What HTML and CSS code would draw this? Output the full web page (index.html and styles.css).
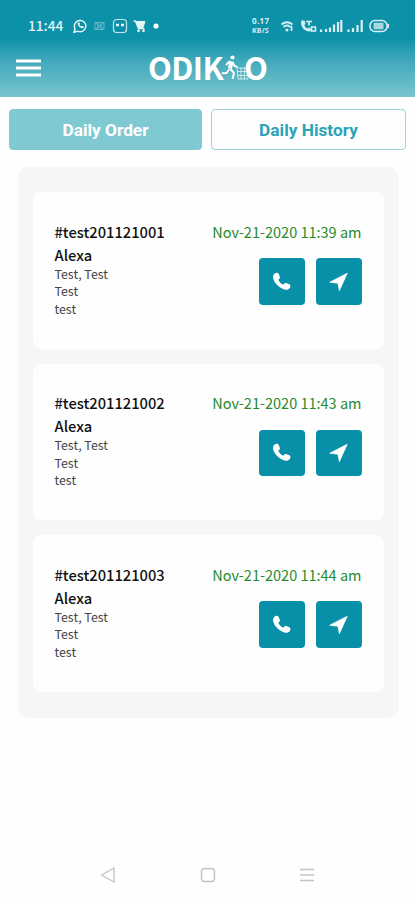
FILE: index.html
```html
<!DOCTYPE html>
<html lang="en">
<head>
<meta charset="utf-8">
<title>Odikko – Daily Order</title>
<link rel="stylesheet" href="styles.css">
</head>
<body>
<svg width="0" height="0" class="defs">
  <symbol id="phone" viewBox="0 0 24 24"><path d="M4.600 2.600c1.500-1 3.500-.7 4.200.8l1.300 3.300c.3 1.100 0 1.900-.8 2.500l-1 .9c1.200 2.600 3 4.400 5.600 5.600l1.100-1.200c.7-.8 1.500-1 2.500-.7l3.500 1.300c1.400.7 1.600 2.700.5 4.200-1.600 2.300-4.700 2.600-7.800 1.300C8.600 18.400 4.600 14.400 2.800 9.700 1.700 6.700 2.500 4 4.600 2.600z" fill="#fff"/></symbol>
  <symbol id="nav" viewBox="0 0 24 24"><path d="M22 2.500 13 22.500 11.300 14 2 12.800z" fill="#fff" stroke="#fff" stroke-width=".8" stroke-linejoin="round"/></symbol>
</svg>
<header class="header">
  <div class="status">
    <span class="clock">11:44</span>
    <svg class="status-left" width="90" height="18" viewBox="0 0 90 18" fill="none" stroke="#e3f4f6">
      <path d="M1 15.200l1-3.500A5.700 5.700 0 1 1 4.500 14.200z" stroke-width="1.500"/>
      <path d="M4.600 5.800c-.5 2.900 3 6.100 5.900 5.300l.2-1.500-1.700-.8-.9.800-1.800-1.900.8-.8-.7-1.500z" fill="#e3f4f6" stroke="none"/>
      <g opacity=".4"><rect x="22" y="5.500" width="9" height="7"/><path d="M22 5.500l9 7M31 5.500l-9 7M25 6v6M28 6v6"/></g>
      <rect x="40.500" y="2.500" width="13" height="13" rx="3" stroke-width="1.200" opacity=".85"/>
      <path d="M43 8h3M48 8h3" stroke-width="2.600"/>
      <path d="M60.500 4h2l3 7.500h6" stroke-width="1.400"/><path d="M63 4.500h9l-2 6h-5z" fill="#e3f4f6"/><circle cx="65.500" cy="13.700" r="1" fill="#e3f4f6"/><circle cx="70.500" cy="13.700" r="1" fill="#e3f4f6"/>
      <circle cx="83" cy="9" r="2.600" fill="#fff" stroke="none"/>
    </svg>
    <div class="speed"><div>0.17</div><div class="unit">KB/S</div></div>
    <svg class="status-right" width="112" height="18" viewBox="0 0 112 18" fill="none" stroke="#d9f0f3">
      <path d="M1.500 7.500q5.500-4.500 11 0M3.500 10q3.500-3 7 0" stroke-width="1.700"/><circle cx="7" cy="13" r="1.500" fill="#d9f0f3" stroke="none"/><path d="M11.500 9v5" stroke-width="1.700"/>
      <path d="M21.500 3.500c-2 5.500 3 11.500 9 11l.5-2.500-2.500-1.500-1.400 1c-1.500-.8-2.300-2-2.800-3.400l1.200-1.100-1-3.500z" fill="#d9f0f3" stroke="none"/>
      <path d="M26 4.500h6M29 4.500v4M31.500 10h4v4h-4z" stroke-width="1.600"/>
      <path d="M41 15v-2.500M46 15v-3M50 15v-4.500M54 15V7.500M58 15V5M61.300 15V3M68.500 15v-2.500M73 15v-4M77.500 15V8M81.700 15V3" stroke-width="2.200"/>
      <rect x="90" y="3.500" width="17" height="11" rx="5" stroke-width="1.500"/><rect x="93.500" y="5.700" width="10" height="6.600" rx="1" fill="#d9f0f3" stroke="none" opacity=".75"/><path d="M108.200 7v4" stroke-width="1.600"/>
    </svg>
  </div>
  <div class="bar">
    <svg class="menu" width="25" height="18" viewBox="0 0 25 18"><path d="M0 2h25M0 9h25M0 16h25" stroke="#fff" stroke-width="2.800"/></svg>
    <div class="logo"><span class="word">ODIK</span>
      <svg class="runner" width="28" height="28" viewBox="0 0 28 28" fill="none" stroke="#fff">
        <circle cx="10.500" cy="3.500" r="2.100" fill="#fff" stroke="none"/>
        <path d="M9.500 7.500l-1.500 7" stroke-width="4"/><path d="M8 7L4 11M10.500 8l2 4 3 1M7.500 15l-3 4-5 .3M8.500 15l3.500 4-1.500 6" stroke-width="1.900"/>
        <path d="M15 14h11v11H16zM15 17.500h11M15.500 21.500H26M19 14v11M22.500 14v11" stroke-width=".9" opacity=".75"/>
      </svg><span class="word">O</span>
    </div>
  </div>
</header>
<nav class="tabs"><a class="tab active">Daily Order</a><a class="tab">Daily History</a></nav>
<main class="panel">
  <article class="card">
    <div class="info"><h2>#test201121001</h2><h3>Alexa</h3><p>Test, Test</p><p>Test</p><p>test</p></div>
    <div class="side"><time>Nov-21-2020 11:39 am</time><div class="actions"><button><svg><use href="#phone"/></svg></button><button><svg><use href="#nav"/></svg></button></div></div>
  </article>
  <article class="card">
    <div class="info"><h2>#test201121002</h2><h3>Alexa</h3><p>Test, Test</p><p>Test</p><p>test</p></div>
    <div class="side"><time>Nov-21-2020 11:43 am</time><div class="actions"><button><svg><use href="#phone"/></svg></button><button><svg><use href="#nav"/></svg></button></div></div>
  </article>
  <article class="card">
    <div class="info"><h2>#test201121003</h2><h3>Alexa</h3><p>Test, Test</p><p>Test</p><p>test</p></div>
    <div class="side"><time>Nov-21-2020 11:44 am</time><div class="actions"><button><svg><use href="#phone"/></svg></button><button><svg><use href="#nav"/></svg></button></div></div>
  </article>
</main>
<footer class="softkeys">
  <svg width="16" height="18" viewBox="0 0 16 18"><path d="M1.500 9L14 2v14z"/></svg>
  <svg width="16" height="18" viewBox="0 0 16 18"><rect x="1.500" y="2.500" width="13" height="13" rx="3"/></svg>
  <svg width="16" height="18" viewBox="0 0 16 18"><path d="M0 3.500h14M0 9h14M0 14.500h14"/></svg>
</footer>
</body>
</html>
```
FILE: styles.css
```css
* { box-sizing: border-box; margin: 0; padding: 0; }
body { width: 415px; height: 900px; display: flex; flex-direction: column; background: #fefefe; font-family: "Noto Sans CJK SC", "Noto Sans", sans-serif; overflow: hidden; }
.defs { position: absolute; }
.header { height: 97px; flex: none; background: linear-gradient(#0c91a8 0 38px, #43aabb 62px, #7ac5cf 97px); color: #fff; }
.status { height: 40px; padding: 17px 0 0 28px; display: flex; align-items: flex-start; }
.clock { width: 45px; font: 500 13.700px/17px "Noto Sans CJK SC", sans-serif; color: #e3f4f6; }
.status-left { flex: none; }
.speed { margin: -1px 0 0 89px; width: 28px; font: 700 8px/10px "Noto Sans", sans-serif; letter-spacing: .4px; color: #d9f0f3; }
.unit { font-size: 7px; line-height: 9px; letter-spacing: .2px; }
.status-right { flex: none; }
.bar { height: 57px; display: flex; align-items: flex-start; padding: 14px 0 0 16px; }
.menu { margin-top: 5px; }
.logo { margin-left: 107px; display: flex; align-items: center; height: 28px; }
.word { font-weight: 700; font-size: 31px; line-height: 26px; margin-top: -2px; letter-spacing: -.6px; }
.runner { margin: 0 -6px 0 -1px; position: relative; }
.tabs { display: flex; gap: 9px; padding: 12px 9px 0 9px; height: 70px; }
.tab { flex: 1; height: 41px; border: 1px solid #9dd2d9; border-radius: 4px; display: flex; align-items: center; justify-content: center; font: 700 17.300px/20px Roboto, sans-serif; color: #2ba3b6; }
.tab.active { flex: 0 0 193px; background: #7fc9d3; border-color: #7fc9d3; color: #fff; }
.panel { width: 381px; height: 551px; margin-left: 17.500px; padding: 25px 15px 0; background: #f6f6f6; border-radius: 11px; display: flex; flex-direction: column; gap: 15px; }
.card { height: 156.600px; flex: none; background: #fefefe; border-radius: 8px; padding: 27.500px 22px 0; display: flex; justify-content: space-between; }
h2, h3 { font-weight: 500; font-size: 14.700px; line-height: 23px; color: #111; }
p { font-size: 12.400px; line-height: 17.600px; color: #444; }
.side { display: flex; flex-direction: column; align-items: flex-end; }
time { font-size: 14.500px; line-height: 23px; color: #288a2c; white-space: nowrap; }
.actions { display: flex; gap: 11.500px; margin-top: 15.500px; }
button { width: 45.500px; height: 46.500px; border: 0; border-radius: 4px; background: #0790a8; display: flex; align-items: center; justify-content: center; }
button svg { width: 21px; height: 21px; }
.softkeys { margin-top: 148px; display: flex; padding-left: 100px; gap: 84px; }
.softkeys svg { fill: none; stroke: #c4c4c4; stroke-width: 1.400; stroke-linejoin: round; }
```
